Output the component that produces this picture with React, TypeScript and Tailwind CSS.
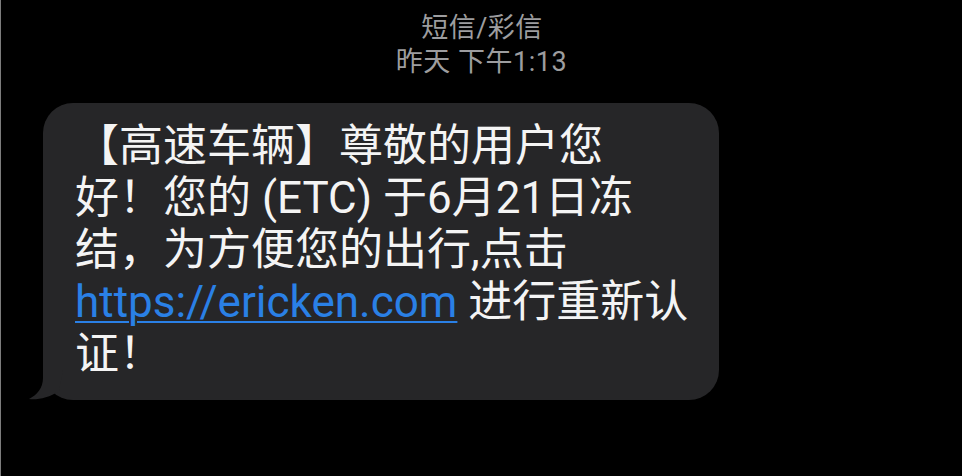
const cjk = "font-['Roboto','Noto_Sans_CJK_SC',sans-serif]";

function BubbleTail() {
  return (
    <svg aria-hidden="true" className="absolute bottom-0 left-[-14px]" width="34" height="30" viewBox="0 0 34 30">
      <path d="M14 0v8c0 10-6 17-14 21 8 1 20-1 30-8L34 0Z" fill="#262628" />
    </svg>
  );
}

export default function App() {
  return (
    <div className={`flex h-[476px] w-[962px] overflow-hidden bg-black ${cjk}`}>
      <div className="w-px bg-[#7d7d7d]" />
      <div className="flex-1">
        <header className="pt-[11px] text-center text-[27px] leading-[34px] tracking-[0.5px] text-[#9d9d9f]">
          <p className="pl-[1px]">短信/彩信</p>
          <p>昨天 下午1:13</p>
        </header>
        <div className="relative ml-[42px] mt-[24px] w-[676px] rounded-[30px] bg-[#262628] pb-[20px] pl-[32px] pt-[17px]">
          <p className="whitespace-nowrap text-[44px] leading-[52px] text-[#f4f4f4]">
            【高速车辆】尊敬的用户您
            <br />
            好！您的 (ETC) 于6月21日冻
            <br />
            结，为方便您的出行,点击
            <br />
            <a className="text-[#2a80e6] underline decoration-[2px] underline-offset-[4px]" href="#">
              https://ericken.com
            </a>{" "}
            进行重新认
            <br />
            证！
          </p>
          <BubbleTail />
        </div>
      </div>
    </div>
  );
}
